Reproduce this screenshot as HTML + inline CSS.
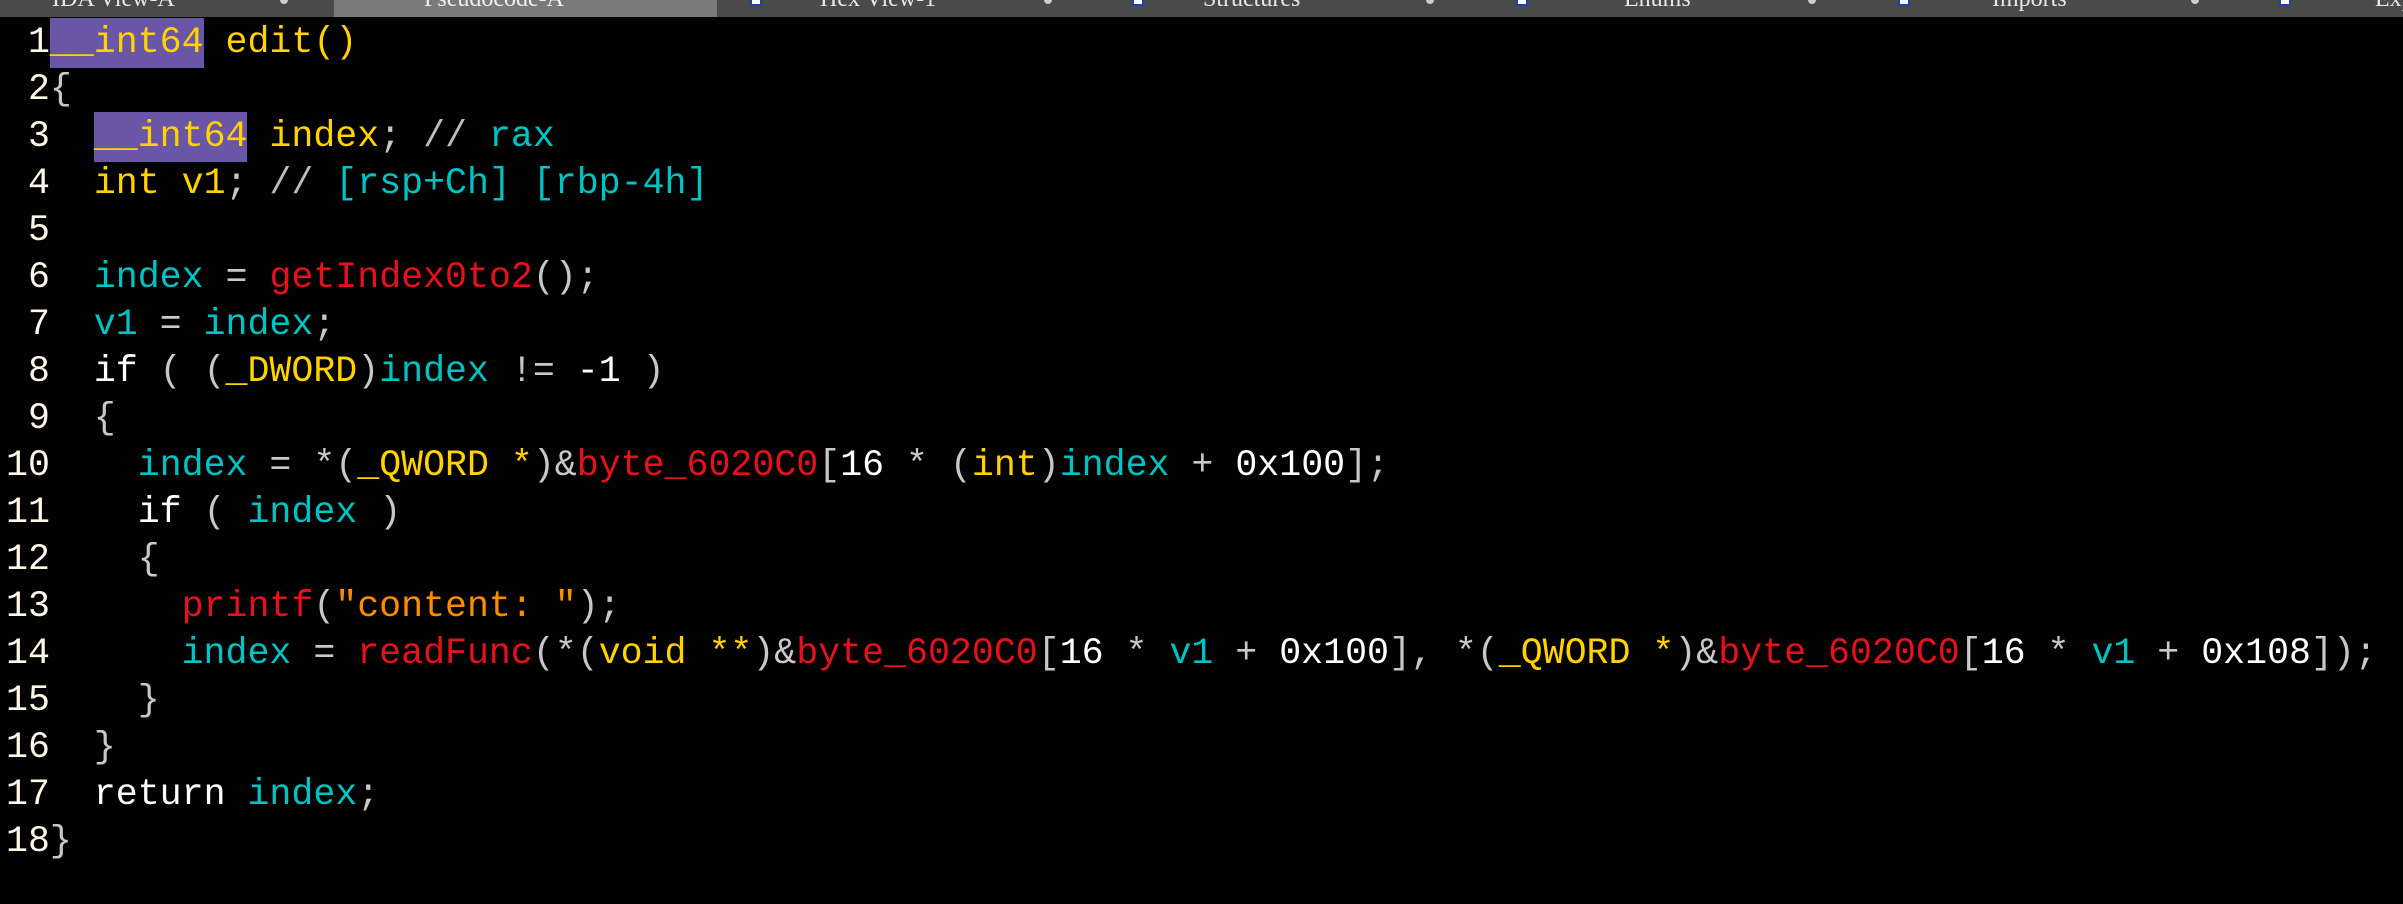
<!DOCTYPE html>
<html><head><meta charset="utf-8"><style>
html,body{margin:0;width:2403px;height:904px;background:#020202;overflow:hidden;position:relative}
#tabs{position:absolute;left:0;top:0;width:2403px;height:17px;background:#4a4a4a;overflow:hidden;z-index:2}
#act{position:absolute;left:334px;top:0;width:383px;height:17px;background:#7a7a7a}
.tl{position:absolute;top:-14px;font:24px "Liberation Serif",serif;color:#e8e8e8;white-space:nowrap}
.dot{position:absolute;top:0;width:8px;height:4px;background:#cfcfcf;border-radius:0 0 4px 4px}
.bl{position:absolute;top:0;width:8px;height:4px;border:2px solid #2040b0;border-top:none;background:#fff}
#code{position:absolute;left:6px;top:19px;font-family:"Liberation Mono",monospace;font-size:36.6px;color:#c8c8c8}
.l{height:47px;line-height:47px;white-space:pre}
.n{color:#fff8e8}.y{color:#ffd200}.c{color:#00c4c4}.r{color:#e8101c}.w{color:#fff}.o{color:#ff8c00}.g{color:#bdbdbd}
.h{background:#6a56a6;padding:4px 0 5px}
</style></head><body>
<div id="tabs"><div id="act"></div>
<span class="tl" style="left:52px">IDA View-A</span>
<span class="tl" style="left:424px;color:#f0f0f0">Pseudocode-A</span>
<span class="tl" style="left:820px">Hex View-1</span>
<span class="tl" style="left:1203px">Structures</span>
<span class="tl" style="left:1624px">Enums</span>
<span class="tl" style="left:1992px">Imports</span>
<span class="tl" style="left:2375px">Exports</span>
<div class="dot" style="left:280px"></div><div class="dot" style="left:1044px"></div><div class="dot" style="left:1426px"></div><div class="dot" style="left:1808px"></div><div class="dot" style="left:2191px"></div>
<div class="bl" style="left:750px"></div><div class="bl" style="left:1132px"></div><div class="bl" style="left:1516px"></div><div class="bl" style="left:1898px"></div><div class="bl" style="left:2279px"></div>
</div>
<div id="code"><div class="l"><span class="n"> 1</span><span class="y h">__int64</span><span class="y"> edit()</span></div><div class="l"><span class="n"> 2</span>{</div><div class="l"><span class="n"> 3</span>  <span class="y h">__int64</span> <span class="y">index</span>; <span class="g">//</span> <span class="c">rax</span></div><div class="l"><span class="n"> 4</span>  <span class="y">int v1</span>; <span class="g">//</span> <span class="c">[rsp+Ch] [rbp-4h]</span></div><div class="l"><span class="n"> 5</span></div><div class="l"><span class="n"> 6</span>  <span class="c">index</span> = <span class="r">getIndex0to2</span>();</div><div class="l"><span class="n"> 7</span>  <span class="c">v1</span> = <span class="c">index</span>;</div><div class="l"><span class="n"> 8</span>  <span class="w">if</span> ( (<span class="y">_DWORD</span>)<span class="c">index</span> != <span class="w">-1</span> )</div><div class="l"><span class="n"> 9</span>  {</div><div class="l"><span class="n">10</span>    <span class="c">index</span> = *(<span class="y">_QWORD *</span>)&amp;<span class="r">byte_6020C0</span>[<span class="w">16</span> * (<span class="y">int</span>)<span class="c">index</span> + <span class="w">0x100</span>];</div><div class="l"><span class="n">11</span>    <span class="w">if</span> ( <span class="c">index</span> )</div><div class="l"><span class="n">12</span>    {</div><div class="l"><span class="n">13</span>      <span class="r">printf</span>(<span class="o">"content: "</span>);</div><div class="l"><span class="n">14</span>      <span class="c">index</span> = <span class="r">readFunc</span>(*(<span class="y">void **</span>)&amp;<span class="r">byte_6020C0</span>[<span class="w">16</span> * <span class="c">v1</span> + <span class="w">0x100</span>], *(<span class="y">_QWORD *</span>)&amp;<span class="r">byte_6020C0</span>[<span class="w">16</span> * <span class="c">v1</span> + <span class="w">0x108</span>]);</div><div class="l"><span class="n">15</span>    }</div><div class="l"><span class="n">16</span>  }</div><div class="l"><span class="n">17</span>  <span class="w">return</span> <span class="c">index</span>;</div><div class="l"><span class="n">18</span>}</div></div>
</body></html>
